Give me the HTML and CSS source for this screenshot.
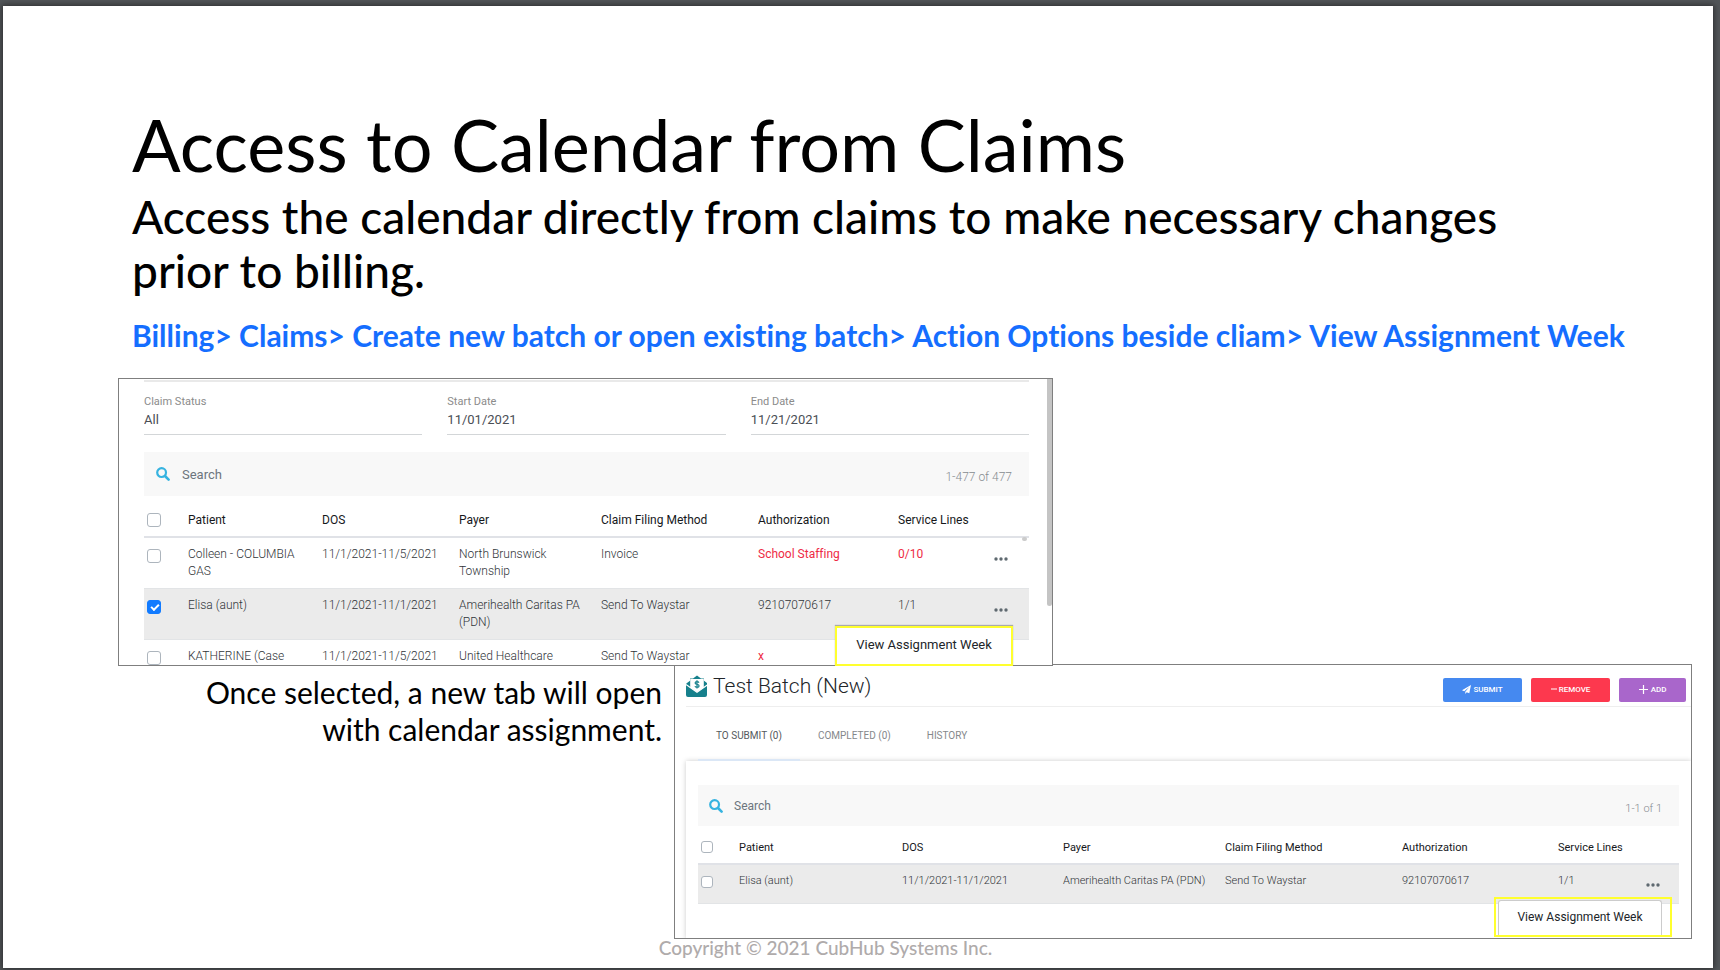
FILE: index.html
```html
<!DOCTYPE html>
<html lang="en">
<head>
  <meta charset="UTF-8">
  <meta name="viewport" content="width=device-width, initial-scale=1.0">
  <title>Access to Calendar from Claims</title>
  <link rel="stylesheet" href="styles.css">
</head>
<body>
  <svg class="sprite" aria-hidden="true">
    <symbol id="icon-search" viewBox="0 0 14 14">
      <circle cx="5.6" cy="5.6" r="4.4" fill="none" stroke="currentColor" stroke-width="2.2"/>
      <path d="M9 9l3.600 3.600" stroke="currentColor" stroke-width="2.600" stroke-linecap="round"/>
    </symbol>
    <symbol id="icon-dots" viewBox="0 0 14 4">
      <circle cx="2" cy="2" r="1.7" fill="currentColor"/>
      <circle cx="7" cy="2" r="1.7" fill="currentColor"/>
      <circle cx="12" cy="2" r="1.7" fill="currentColor"/>
    </symbol>
  </svg>

  <main class="slide">
    <header class="intro">
      <h1>Access to Calendar from Claims</h1>
      <p class="lead">Access the calendar directly from claims to make necessary changes<br>prior to billing.</p>
      <p class="path">Billing&gt; Claims&gt; Create new batch or open existing batch&gt; Action Options beside cliam&gt; View Assignment Week</p>
    </header>

    <div class="claims-row">
      <section class="panel claims">
        <div class="claims-body">
          <div class="filters">
            <div class="field">
              <label for="status">Claim Status</label>
              <select id="status"><option>All</option></select>
            </div>
            <div class="field">
              <label for="start">Start Date</label>
              <input type="text" id="start" value="11/01/2021">
            </div>
            <div class="field">
              <label for="end">End Date</label>
              <input type="text" id="end" value="11/21/2021">
            </div>
          </div>
          <div class="search">
            <svg class="search-icon"><use href="#icon-search"/></svg>
            <input type="text" placeholder="Search" aria-label="Search claims">
            <span class="count">1-477 of 477</span>
          </div>
          <table>
            <colgroup>
              <col class="c-check"><col class="c-patient"><col class="c-dos"><col class="c-payer"><col class="c-method"><col class="c-auth"><col class="c-lines">
              <col class="c-more">
            </colgroup>
            <thead>
              <tr>
                <th><input type="checkbox" aria-label="Select all claims"></th>
                <th>Patient</th>
                <th>DOS</th>
                <th>Payer</th>
                <th>Claim Filing Method</th>
                <th>Authorization</th>
                <th>Service Lines</th>
                <th></th>
              </tr>
            </thead>
            <tbody>
              <tr>
                <td><input type="checkbox" aria-label="Select Colleen"></td>
                <td>Colleen - COLUMBIA<br>GAS</td>
                <td>11/1/2021-11/5/2021</td>
                <td>North Brunswick<br>Township</td>
                <td>Invoice</td>
                <td class="alert">School Staffing</td>
                <td class="alert">0/10</td>
                <td><button class="more" aria-label="Actions"><svg><use href="#icon-dots"/></svg></button></td>
              </tr>
              <tr class="selected">
                <td><input type="checkbox" checked aria-label="Select Elisa"></td>
                <td>Elisa (aunt)</td>
                <td>11/1/2021-11/1/2021</td>
                <td>Amerihealth Caritas PA<br>(PDN)</td>
                <td>Send To Waystar</td>
                <td>92107070617</td>
                <td>1/1</td>
                <td><button class="more" aria-label="Actions"><svg><use href="#icon-dots"/></svg></button></td>
              </tr>
              <tr>
                <td><input type="checkbox" aria-label="Select Katherine"></td>
                <td>KATHERINE (Case</td>
                <td>11/1/2021-11/5/2021</td>
                <td>United Healthcare</td>
                <td>Send To Waystar</td>
                <td class="alert">x</td>
                <td></td>
                <td></td>
              </tr>
            </tbody>
          </table>
        </div>
        <span class="scrollbar"></span>
        <span class="scroll-dot"></span>
        <div class="menu">
          <button>View Assignment Week</button>
        </div>
      </section>
    </div>

    <div class="batch-row">
      <p class="caption">Once selected, a new tab will open<br>with calendar assignment.</p>

      <section class="panel batch">
        <div class="batch-head">
          <svg class="logo" viewBox="0 0 22 22">
            <path d="M1 8l3-2.2V3.6h3L11 .4l4 3.2h3v2.2L21 8v12q0 2-2 2H2Q0 22 0 20V9z" fill="#16808c"/>
            <path d="M4.2 4h13.600v8.500L11 17 4.200 12.500z" fill="#fff"/>
            <path d="M0 9.500l11 7.800 11-7.800" fill="none" stroke="#fff" stroke-width="1.200"/>
            <path d="M13 7.600q-.6-.9-2-.9-1.900 0-1.900 1.300 0 1.100 1.900 1.400 2.100.3 2.100 1.600 0 1.300-2.100 1.300-1.500 0-2.100-1M11 5.300v8.200" fill="none" stroke="#16808c" stroke-width="1.200"/>
          </svg>
          <h2>Test Batch (New)</h2>
          <div class="actions">
            <button class="submit">
              <svg viewBox="0 0 9 9"><path d="M9 0L0 5.200l2.200 1L7.300 2 3.300 6.700V9l1.400-1.700L7.300 8.300z" fill="currentColor"/></svg>
              SUBMIT
            </button>
            <button class="remove">
              <svg class="minus" viewBox="0 0 6 8"><path d="M0 3.500h6" stroke="currentColor"/></svg>
              REMOVE
            </button>
            <button class="add">
              <svg viewBox="0 0 9 9"><path d="M0 4.500h9M4.500 0v9" stroke="currentColor" stroke-width="1.200"/></svg>
              ADD
            </button>
          </div>
        </div>
        <nav class="tabs">
          <a href="#" class="active">TO SUBMIT (0)</a>
          <a href="#">COMPLETED (0)</a>
          <a href="#">HISTORY</a>
        </nav>
        <div class="card">
          <div class="search">
            <svg class="search-icon"><use href="#icon-search"/></svg>
            <input type="text" placeholder="Search" aria-label="Search batch">
            <span class="count">1-1 of 1</span>
          </div>
          <table>
            <colgroup>
              <col class="c-check"><col class="c-patient"><col class="c-dos"><col class="c-payer"><col class="c-method"><col class="c-auth"><col class="c-lines">
              <col class="c-more">
            </colgroup>
            <thead>
              <tr>
                <th><input type="checkbox" aria-label="Select whole batch"></th>
                <th>Patient</th>
                <th>DOS</th>
                <th>Payer</th>
                <th>Claim Filing Method</th>
                <th>Authorization</th>
                <th>Service Lines</th>
                <th></th>
              </tr>
            </thead>
            <tbody>
              <tr class="selected">
                <td><input type="checkbox" aria-label="Select Elisa in batch"></td>
                <td>Elisa (aunt)</td>
                <td>11/1/2021-11/1/2021</td>
                <td>Amerihealth Caritas PA (PDN)</td>
                <td>Send To Waystar</td>
                <td>92107070617</td>
                <td>1/1</td>
                <td><button class="more" aria-label="Actions"><svg><use href="#icon-dots"/></svg></button></td>
              </tr>
            </tbody>
          </table>
        </div>
        <div class="menu">
          <button>View Assignment Week</button>
        </div>
      </section>
    </div>

    <footer>Copyright © 2021 CubHub Systems Inc.</footer>
  </main>
</body>
</html>
```
FILE: styles.css
```css
* {
  margin: 0;
  padding: 0;
  box-sizing: border-box;
}
body {
  background: #525659;
  font-family: Lato, sans-serif;
  font-variant-ligatures: no-common-ligatures;
  color: #000;
  padding: 6px 7px 2px 3px;
  min-height: 100vh;
  display: flex;
}
button, input, select {
  font: inherit;
  color: inherit;
  border: none;
  background: none;
}
.sprite {
  position: absolute;
  width: 0;
  height: 0;
}
.slide {
  flex: 1;
  background: #fff;
  padding-top: 100px;
  box-shadow: 0 0 6px 1px #2c2c2e;
  overflow: hidden;
}

/* slide text */
.intro {
  padding-left: 129px;
  white-space: nowrap;
}
h1 {
  font-size: 72px;
  line-height: 76px;
  font-weight: 400;
  margin-bottom: 8px;
}
.lead {
  font-size: 46px;
  line-height: 54px;
  font-weight: 500;
  margin-bottom: 19px;
}
.path {
  font-size: 30px;
  line-height: 36px;
  font-weight: 700;
  color: #156eff;
  margin-bottom: 25px;
}
.caption {
  font-size: 30px;
  line-height: 37px;
  text-align: right;
  white-space: nowrap;
  padding: 10px 12px 0 0;
}
footer {
  font-size: 19px;
  line-height: 18px;
  color: #afabab;
  font-weight: 500;
  text-align: center;
  padding-right: 65px;
}

/* app panels */
.claims-row {
  display: grid;
  grid-template-columns: 115fr 935fr 660fr;
}
.batch-row {
  display: grid;
  grid-template-columns: 671fr 1018fr 21fr;
  margin-top: -2px;
}
.panel {
  position: relative;
  background: #fff;
  border: 1px solid #7f7f7f;
  font-family: Roboto, sans-serif;
  color: #303438;
}
.claims {
  grid-column: 2;
  z-index: 1;
  font-size: 12px;
}
.claims-body {
  height: 286px;
  overflow: hidden;
  padding: 1px 23px 0 25px;
}
.filters {
  display: grid;
  grid-template-columns: repeat(3, 1fr);
  gap: 25px;
  border-top: 2px solid #e9e9e9;
  padding-top: 13px;
  margin-bottom: 17px;
}
.field label {
  display: block;
  font-size: 11px;
  line-height: 14px;
  color: #8b8b8b;
}
.field input,
.field select {
  appearance: none;
  display: block;
  width: 100%;
  height: 26px;
  padding-bottom: 4px;
  font-size: 13px;
  border-bottom: 1px solid #d3d6d8;
  color: #4a4e55;
}
.search {
  display: flex;
  align-items: center;
  height: 44px;
  background: #f8f8f8;
  padding: 0 17px 0 12px;
}
.search-icon {
  width: 14px;
  height: 14px;
  color: #36b3e0;
}
.search input {
  flex: 1;
  font-size: 13px;
  padding-left: 12px;
}
.search input::placeholder {
  color: #6c757d;
  opacity: 1;
}
.count {
  color: #868b90;
  font-weight: 300;
  padding-top: 6px;
}
table {
  width: 100%;
  table-layout: fixed;
  border-collapse: collapse;
}
th, td {
  text-align: left;
  vertical-align: top;
  line-height: 17px;
  white-space: nowrap;
}
th {
  height: 41px;
  padding-top: 16px;
  font-weight: 400;
  color: #16181b;
  border-bottom: 2px solid #e0e2e7;
}
td {
  height: 51px;
  padding-top: 8px;
  font-weight: 300;
  border-bottom: 1px solid #e2e4e6;
}
.selected td {
  background: #ebebeb;
}
.alert {
  color: #ee2b45;
  font-weight: 400;
}
input[type="checkbox"] {
  appearance: none;
  display: block;
  width: 14px;
  height: 14px;
  margin: 1px 0 0 3px;
  border: 1px solid #adb5bd;
  border-radius: 3px;
  background: #fff;
}
td input[type="checkbox"] {
  margin-top: 3px;
}
input[type="checkbox"]:checked {
  background: #127bff;
  border-color: #127bff;
}
input[type="checkbox"]:checked::after {
  content: "";
  display: block;
  width: 6px;
  height: 3px;
  margin: 3px;
  border-left: 2px solid #fff;
  border-bottom: 2px solid #fff;
  transform: rotate(-45deg);
}
.more {
  display: block;
  padding-top: 11px;
}
.more svg {
  display: block;
  width: 14px;
  height: 4px;
  color: #5f6970;
}
.c-check { width: 44px; }
.c-patient { width: 134px; }
.c-dos { width: 137px; }
.c-payer { width: 142px; }
.c-method { width: 157px; }
.c-auth { width: 140px; }
.c-lines { width: 96px; }
.c-more { width: 35px; }

.scrollbar {
  position: absolute;
  top: 0;
  right: 0;
  width: 5px;
  height: 227px;
  background: #c4c4c4;
  border-radius: 0 0 3px 3px;
}
.scroll-dot {
  position: absolute;
  top: 158px;
  right: 25px;
  width: 5px;
  height: 4px;
  border-radius: 2px;
  background: #ccc;
}
.menu {
  position: absolute;
  right: 39px;
  bottom: -1px;
  width: 178px;
  height: 40px;
  background: #fff;
  border: 2px solid #ffff2e;
  box-shadow: 0 -1px 1px #aaa;
}
.menu button {
  width: 100%;
  height: 100%;
  padding-bottom: 3px;
  font-size: 13px;
  color: #212529;
}

/* batch panel */
.batch {
  height: 275px;
  font-size: 11px;
  padding-left: 11px;
  overflow: hidden;
}
.batch-head {
  display: flex;
  align-items: center;
  height: 42px;
  padding-right: 5px;
  border-bottom: 1px solid #eee;
}
.logo {
  width: 22px;
  height: 22px;
}
h2 {
  font-size: 21px;
  font-weight: 300;
  line-height: 26px;
  color: #212529;
  padding-left: 5px;
}
.actions {
  display: flex;
  gap: 9px;
  margin-left: auto;
  padding-top: 8px;
}
.actions button {
  display: flex;
  align-items: center;
  justify-content: center;
  gap: 2px;
  width: 79px;
  height: 24px;
  border-radius: 2px;
  font-size: 8px;
  font-weight: 500;
  color: #fff;
}
.actions svg {
  width: 9px;
  height: 9px;
}
.actions .minus {
  width: 6px;
}
.actions .submit { background: #4589f0; }
.actions .remove { background: #fd384e; }
.actions .add {
  width: 67px;
  gap: 3px;
  background: #a966cb;
}
.tabs {
  display: flex;
  height: 54px;
  padding-left: 12px;
}
.tabs a {
  padding: 22px 18px 0;
  font-size: 10px;
  line-height: 14px;
  color: #85888b;
  text-decoration: none;
}
.tabs .active {
  color: #55595d;
  border-bottom: 2px solid #dbe7f6;
}
.card {
  height: 178px;
  padding: 24px 12px 0 12px;
  box-shadow: 0 0 5px #ccc;
}
.batch .search {
  height: 41px;
  padding-left: 11px;
}
.batch .search input {
  font-size: 12px;
  padding-left: 11px;
}
.batch th {
  height: 38px;
  padding-top: 14px;
}
.batch th, .batch td {
  line-height: 16px;
}
.batch td {
  height: 39px;
  padding-top: 8px;
}
.batch input[type="checkbox"] {
  width: 12px;
  height: 12px;
}
.batch .more {
  padding-top: 10px;
}
.batch .c-check { width: 41px; }
.batch .c-patient { width: 163px; }
.batch .c-dos { width: 161px; }
.batch .c-payer { width: 162px; }
.batch .c-method { width: 177px; }
.batch .c-auth { width: 156px; }
.batch .c-lines { width: 88px; }
.batch .c-more { width: 33px; }
.batch .menu {
  right: 19px;
  bottom: 1px;
  padding: 1px 8px 0 2px;
  background: none;
  box-shadow: none;
}
.batch .menu button {
  background: #fff;
  border: 1px solid #ccc;
  border-bottom: none;
  border-radius: 3px 3px 0 0;
  font-size: 12px;
}
```
